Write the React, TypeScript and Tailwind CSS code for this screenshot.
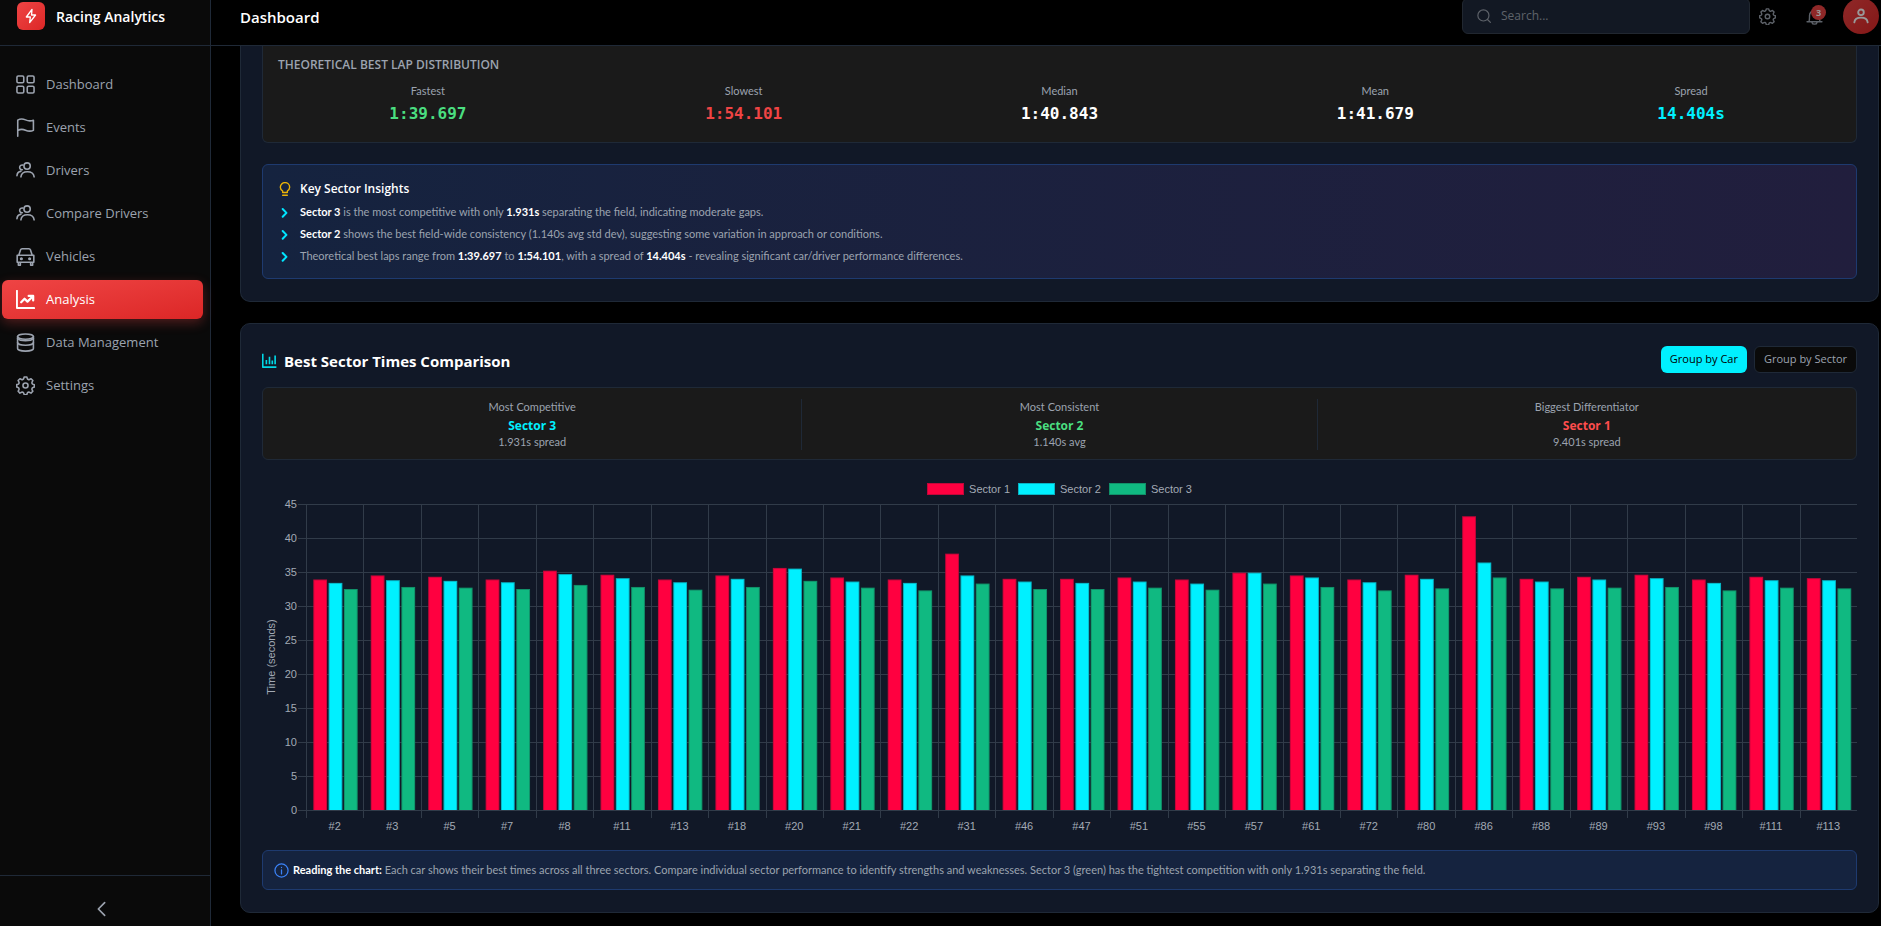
import React, { useLayoutEffect, useRef, useState } from 'react';

type IconProps = { className?: string; children?: React.ReactNode; strokeWidth?: number };

const Icon: React.FC<IconProps> = ({ className = 'size-[19px]', children, strokeWidth = 2 }) => (
  <svg
    viewBox="0 0 24 24"
    className={`shrink-0 ${className}`}
    fill="none"
    stroke="currentColor"
    strokeWidth={strokeWidth}
    strokeLinecap="round"
    strokeLinejoin="round"
    aria-hidden="true"
  >
    {children}
  </svg>
);

const GridIcon = () => (
  <Icon>
    <rect x="1.2" y="1.2" width="8.6" height="8.6" rx="1.6" />
    <rect x="14.2" y="1.2" width="8.6" height="8.6" rx="1.6" />
    <rect x="1.2" y="14.2" width="8.6" height="8.6" rx="1.6" />
    <rect x="14.2" y="14.2" width="8.6" height="8.6" rx="1.6" />
  </Icon>
);

const FlagIcon = () => (
  <Icon>
    <path d="M2.200 23V2.700C5.500.7 8.500.8 12 2.400s6.500 1.800 10 .4v12.800c-3.500 1.600-6.500 1.300-10-.2s-6.500-1.600-9.800.6" />
  </Icon>
);

const PeopleIcon = () => (
  <Icon>
    <circle cx="14" cy="6.400" r="4" />
    <path d="M6.200 20c.5-4.200 3.600-6.400 8.200-6.400s8 2.200 8.500 6.400" />
    <path d="M8.600 5.200a3 3 0 1 0-.6 5.800M1.200 18.600c.2-3.300 1.800-5.200 5-5.500" />
  </Icon>
);

const CarIcon = () => (
  <Icon>
    <path d="M3.500 10.500 5.800 3.600A2 2 0 0 1 7.700 2.200h8.600a2 2 0 0 1 1.900 1.400l2.300 6.900M1.500 10.500h21v8.700h-21zM3 19.500V23h2.500v-3.500M18.500 19.500V23H21v-3.500" />
    <circle cx="6.800" cy="14.800" r="1" fill="currentColor" />
    <circle cx="17.200" cy="14.800" r="1" fill="currentColor" />
  </Icon>
);

const TrendIcon = () => (
  <Icon>
    <path d="M1.200 1v21.800H23" strokeWidth="2.400" />
    <path d="m6.500 15.500 4.300-4.500 3.700 3.700 6.800-6.800M16 7.500h5.700v5.700" strokeWidth="2.800" />
  </Icon>
);

const DatabaseIcon = () => (
  <Icon>
    <ellipse cx="12" cy="4.500" rx="10" ry="3.300" />
    <path d="M2 4.500v15c0 1.900 4.500 3.400 10 3.400s10-1.500 10-3.400v-15" />
    <path d="M2 12c0 1.900 4.500 3.500 10 3.500s10-1.600 10-3.500" />
    <path d="M2 7c1.500 1.800 5 2.800 10 2.800S20.500 8.800 22 7" />
  </Icon>
);

const GearIcon: React.FC<{ className?: string }> = ({ className }) => (
  <Icon className={className}>
    <circle cx="12" cy="12" r="3.200" />
    <path d="M9.700 3.300 10.300 1.200h3.400l.6 2.100a2 2 0 0 0 2.700 1.100l2-1 2.300 2.300-1 2a2 2 0 0 0 1.100 2.700l1.800.6v2.800l-1.800.8a2 2 0 0 0-1.100 2.700l1 2-2.400 2.300-2-1a2 2 0 0 0-2.700 1.100l-.6 2.100h-3.200l-.6-2.100a2 2 0 0 0-2.800-1.100l-2 1-2.300-2.300 1-2a2 2 0 0 0-1.100-2.700l-1.700-.8v-2.900l1.700-.5a2 2 0 0 0 1.100-2.700l-1-2L5 3.400l2 1a2 2 0 0 0 2.700-1.100z" />
  </Icon>
);

const navItems = [
  { label: 'Dashboard', icon: <GridIcon /> },
  { label: 'Events', icon: <FlagIcon /> },
  { label: 'Drivers', icon: <PeopleIcon /> },
  { label: 'Compare Drivers', icon: <PeopleIcon /> },
  { label: 'Vehicles', icon: <CarIcon /> },
  { label: 'Analysis', icon: <TrendIcon />, active: true },
  { label: 'Data Management', icon: <DatabaseIcon /> },
  { label: 'Settings', icon: <GearIcon /> },
];

const Sidebar: React.FC = () => (
  <aside className="flex w-[211px] shrink-0 flex-col border-r border-[#1f2937] bg-[#0a0a0a]">
    <div className="flex h-[46px] items-start gap-[11px] border-b border-[#1f2937] pt-0.5 pl-[17px]">
      <div className="flex size-7 items-center justify-center rounded-md bg-linear-to-br from-[#ef4444] to-[#dc2626] text-white">
        <Icon className="size-4">
          <path d="M13.500 2 5 13.500h6L10 22l8.800-11.500h-6z" />
        </Icon>
      </div>
      <span className="text-[14px] leading-[30px] font-semibold text-white">Racing Analytics</span>
    </div>
    <nav className="flex flex-1 flex-col gap-1 pt-[19px] pr-[7px] pl-0.5">
      {navItems.map((item) => (
        <a
          key={item.label}
          href="#"
          className={
            item.active
              ? 'flex h-[39px] items-center gap-[11px] rounded-md bg-linear-to-br from-[#ef4444] to-[#dc2626] pl-3.5 text-[13px] font-medium text-white shadow-[0_4px_12px_rgba(239,68,68,0.3)]'
              : 'flex h-[39px] items-center gap-[11px] rounded-md pl-3.5 text-[13px] font-medium text-[#9ca3af]'
          }
        >
          {item.icon}
          {item.label}
        </a>
      ))}
    </nav>
    <div className="flex h-[51px] justify-center border-t border-[#1f2937] pt-[25px] pr-[7px]">
      <button type="button" aria-label="Collapse sidebar" className="flex size-4 items-center justify-center text-[#9ca3af]">
        <Icon className="size-4" strokeWidth={2.5}>
          <path d="m16 2.500-9.500 9.500 9.500 9.500" />
        </Icon>
      </button>
    </div>
  </aside>
);

const Header: React.FC = () => (
  <header className="flex h-[46px] shrink-0 items-start justify-between overflow-hidden border-b border-[#1f2937] pr-0.5 pl-[29px]">
    <h1 className="text-[15px] leading-[34px] font-semibold text-white">Dashboard</h1>
    <div className="flex h-8 items-center opacity-60">
      <label className="flex h-9 w-[288px] items-center gap-2.5 rounded-md border border-[#374151] bg-[#1e293b] px-3.5 text-[#9ca3af]">
        <Icon className="size-3.5">
          <circle cx="11" cy="11" r="9.500" />
          <path d="m18 18 5 5" />
        </Icon>
        <input
          type="text"
          aria-label="Search"
          placeholder="Search..."
          className="w-full bg-transparent text-[12px] text-white outline-none placeholder:text-[#9ca3af]"
        />
      </label>
      <button type="button" aria-label="Settings" className="ml-2 flex size-[18px] items-center justify-center text-[#9ca3af]">
        <GearIcon className="size-[17px]" />
      </button>
      <button type="button" aria-label="Notifications" className="relative ml-[29px] flex size-[18px] items-center justify-center text-[#9ca3af]">
        <Icon className="size-[17px]">
          <path d="M1.500 19.500h21M4 19.500c1-2 1-4 1-9a7 7 0 0 1 14 0c0 5 0 7 1 9M8.500 20.500c.5 3 6.500 3 7 0" />
        </Icon>
        <span className="absolute -top-0.5 -right-[3px] flex size-[15px] items-center justify-center rounded-full bg-[#ef4444] text-[9px] font-bold text-white">
          3
        </span>
      </button>
      <button type="button" aria-label="Account" className="ml-5 flex size-9 items-center justify-center rounded-full bg-linear-to-br from-[#ef4444] to-[#dc2626] text-white">
        <Icon className="size-4" strokeWidth={2.8}>
          <circle cx="12" cy="6.500" r="4.200" />
          <path d="M2 21.500c.5-4.500 4-7 10-7s9.500 2.500 10 7" />
        </Icon>
      </button>
    </div>
  </header>
);

const lapStats = [
  { label: 'Fastest', value: '1:39.697', color: 'text-[#4ade80]' },
  { label: 'Slowest', value: '1:54.101', color: 'text-[#ef4444]' },
  { label: 'Median', value: '1:40.843', color: 'text-white' },
  { label: 'Mean', value: '1:41.679', color: 'text-white' },
  { label: 'Spread', value: '14.404s', color: 'text-[#00f0ff]' },
];

const B: React.FC<{ children: React.ReactNode }> = ({ children }) => (
  <strong className="font-bold text-white">{children}</strong>
);

const insights = [
  <>
    <B>Sector 3</B> is the most competitive with only <B>1.931s</B> separating the field, indicating moderate gaps.
  </>,
  <>
    <B>Sector 2</B> shows the best field-wide consistency (1.140s avg std dev), suggesting some variation in approach or
    conditions.
  </>,
  <>
    Theoretical best laps range from <B>1:39.697</B> to <B>1:54.101</B>, with a spread of <B>14.404s</B> - revealing
    significant car/driver performance differences.
  </>,
];

const SectorInsights: React.FC = () => (
  <section className="rounded-b-[10px] border border-t-0 border-[#1f2937] bg-[#111827] px-[21px] pb-[22px]">
    <div className="rounded-b-md border border-t-0 border-[#1f2937] bg-[#1a1a1a] px-[15px] pt-[9px] pb-[16px]">
      <h3 className="text-[12px] leading-5 font-semibold text-[#9ca3af]">THEORETICAL BEST LAP DISTRIBUTION</h3>
      <div className="mt-2 grid grid-cols-5 gap-4 text-center">
        {lapStats.map((stat) => (
          <div key={stat.label}>
            <div className='font-[Lato,"Noto_Sans",sans-serif] text-[11px] leading-4 text-[#9ca3af]'>{stat.label}</div>
            <div className={`mt-[3px] font-["DejaVu_Sans_Mono",monospace] text-[16px] leading-6 font-bold ${stat.color}`}>
              {stat.value}
            </div>
          </div>
        ))}
      </div>
    </div>
    <div className="mt-[21px] rounded-md border border-[#1e3a6f] bg-linear-to-r from-[#15233f] to-[#211e3d] px-[15px] pt-3.5 pb-3.5">
      <h3 className="flex items-center gap-2 text-[12px] leading-5 font-semibold text-white">
        <Icon className="size-3.5 text-[#eab308]" strokeWidth={2.4}>
          <path d="M8 18v-2.500C5 13.500 4 11.500 4 9a8 8 0 0 1 16 0c0 2.500-1 4.500-4 6.500V18zM8 22.800h8" />
        </Icon>
        Key Sector Insights
      </h3>
      <ul className="mt-1 flex flex-col gap-[5px]">
        {insights.map((text, i) => (
          <li key={i} className='flex items-center gap-2 font-[Lato,"Noto_Sans",sans-serif] text-[11px] leading-[17px] text-[#9ca3af]'>
            <Icon className="size-3.5 text-[#00e5ff]" strokeWidth={3.5}>
              <path d="m8 7 6.500 6.500L8 20" />
            </Icon>
            <span>{text}</span>
          </li>
        ))}
      </ul>
    </div>
  </section>
);

const series = [
  { name: 'Sector 1', fill: '#ff0040', stroke: '#c20739' },
  { name: 'Sector 2', fill: '#00f0ff', stroke: '#08b4c4' },
  { name: 'Sector 3', fill: '#10b981', stroke: '#119069' },
];

const cars: [string, number, number, number][] = [
  ['#2', 33.9, 33.4, 32.5],
  ['#3', 34.5, 33.8, 32.8],
  ['#5', 34.3, 33.7, 32.7],
  ['#7', 33.9, 33.5, 32.5],
  ['#8', 35.2, 34.7, 33.1],
  ['#11', 34.6, 34.1, 32.8],
  ['#13', 33.9, 33.5, 32.4],
  ['#18', 34.5, 34.0, 32.8],
  ['#20', 35.6, 35.5, 33.7],
  ['#21', 34.2, 33.6, 32.7],
  ['#22', 33.9, 33.4, 32.3],
  ['#31', 37.7, 34.5, 33.3],
  ['#46', 34.0, 33.6, 32.5],
  ['#47', 34.0, 33.4, 32.5],
  ['#51', 34.2, 33.6, 32.7],
  ['#55', 33.9, 33.3, 32.4],
  ['#57', 34.9, 34.9, 33.3],
  ['#61', 34.5, 34.2, 32.8],
  ['#72', 33.9, 33.5, 32.3],
  ['#80', 34.6, 34.0, 32.6],
  ['#86', 43.2, 36.4, 34.2],
  ['#88', 34.0, 33.6, 32.6],
  ['#89', 34.3, 33.9, 32.7],
  ['#93', 34.6, 34.1, 32.8],
  ['#98', 33.9, 33.4, 32.3],
  ['#111', 34.3, 33.8, 32.7],
  ['#113', 34.1, 33.8, 32.6],
];

const PLOT_LEFT = 44;
const PLOT_TOP = 8;
const PLOT_HEIGHT = 306;
const MAX = 45;

const BarChart: React.FC = () => {
  const boxRef = useRef<HTMLDivElement>(null);
  const [width, setWidth] = useState(1595);

  useLayoutEffect(() => {
    const box = boxRef.current;
    if (!box) return;
    const measure = () => setWidth(box.clientWidth);
    measure();
    const observer = new ResizeObserver(measure);
    observer.observe(box);
    return () => observer.disconnect();
  }, []);

  const bottom = PLOT_TOP + PLOT_HEIGHT;
  const step = (width - PLOT_LEFT) / cars.length;
  const slot = (step * 0.8) / 3;
  const barWidth = slot * 0.9;
  const toY = (value: number) => bottom - (value / MAX) * PLOT_HEIGHT;

  return (
    <div ref={boxRef} className="w-full">
      <svg
        width={width}
        height="340"
        role="img"
        aria-label="Best sector times per car"
        className='block font-["Liberation_Sans",sans-serif] text-[11px]'
      >
        {Array.from({ length: 10 }, (_, i) => i * 5).map((tick) => (
          <g key={tick}>
            <line x1={PLOT_LEFT - 8} x2={width} y1={Math.round(toY(tick)) + 0.5} y2={Math.round(toY(tick)) + 0.5} stroke="#313b49" />
            <text x={PLOT_LEFT - 9} y={toY(tick) + 4} textAnchor="end" fill="#a3aab5">
              {tick}
            </text>
          </g>
        ))}
        {cars.map(([name], i) => {
          const x = Math.round(PLOT_LEFT + i * step) + 0.5;
          return (
            <g key={name}>
              <line x1={x} x2={x} y1={PLOT_TOP} y2={bottom + 8} stroke="#313b49" />
              <text x={PLOT_LEFT + (i + 0.5) * step} y={bottom + 20} textAnchor="middle" fill="#a3aab5">
                {name}
              </text>
            </g>
          );
        })}
        {cars.map(([name, ...times], i) =>
          times.map((time, s) => {
            const x = PLOT_LEFT + i * step + step * 0.1 + s * slot + slot * 0.1;
            return (
              <g key={`${name}-${s}`}>
                <rect x={x} y={toY(time)} width={barWidth} height={bottom - toY(time)} fill={series[s].stroke} />
                <rect x={x + 1} y={toY(time) + 1} width={barWidth - 2} height={bottom - toY(time) - 1} fill={series[s].fill} />
              </g>
            );
          })
        )}
        <text transform={`translate(13 ${PLOT_TOP + PLOT_HEIGHT / 2}) rotate(-90)`} textAnchor="middle" fill="#a3aab5">
          Time (seconds)
        </text>
      </svg>
    </div>
  );
};

const highlights = [
  { label: 'Most Competitive', value: 'Sector 3', note: '1.931s spread', color: 'text-[#00f0ff]' },
  { label: 'Most Consistent', value: 'Sector 2', note: '1.140s avg', color: 'text-[#4ade80] border-x' },
  { label: 'Biggest Differentiator', value: 'Sector 1', note: '9.401s spread', color: 'text-[#ff4d4d]' },
];

const SectorComparison: React.FC = () => (
  <section className="mt-[21px] rounded-[10px] border border-[#1f2937] bg-[#111827] px-[21px] pt-[22px] pb-[22px]">
    <div className="flex items-center justify-between">
      <h2 className="flex items-center gap-[7px] text-[15px] leading-7 font-bold text-white">
        <Icon className="size-[15px] text-[#00d8e6]">
          <path d="M1.200 1v21.500H23M7 18v-7M12 18V6M16.500 18v-6M21 18V4" strokeLinecap="butt" strokeWidth="2.600" />
        </Icon>
        Best Sector Times Comparison
      </h2>
      <div className="flex gap-[7px] pb-0.5">
        <button type="button" className="h-[27px] rounded-md bg-[#00f0ff] px-[9px] text-[11px] font-medium text-black">
          Group by Car
        </button>
        <button type="button" className="h-[27px] rounded-md border border-[#1f2937] bg-[#0a0a0a] px-[9px] text-[11px] font-medium text-[#9ca3af]">
          Group by Sector
        </button>
      </div>
    </div>
    <div className="mt-3 grid grid-cols-3 gap-[11px] rounded-md border border-[#1f2937] bg-[#1a1a1a] px-[11px] pt-[11px] pb-[9px] text-center">
      {highlights.map((item) => (
        <div key={item.label} className={`border-[#1f2937] ${item.color}`}>
          <div className='font-[Lato,"Noto_Sans",sans-serif] text-[11px] leading-4 text-[#9ca3af]'>{item.label}</div>
          <div className="mt-[3px] text-[12px] leading-4 font-bold">{item.value}</div>
          <div className='font-[Lato,"Noto_Sans",sans-serif] text-[11px] leading-4 text-[#9ca3af]'>{item.note}</div>
        </div>
      ))}
    </div>
    <div className='mt-[22px] flex justify-center gap-2 font-["Liberation_Sans",sans-serif] text-[11px] leading-[14px] text-[#a3aab5]'>
      {series.map((s) => (
        <div key={s.name} className="flex items-center gap-[5px]">
          <span className="h-3 w-[37px] border" style={{ backgroundColor: s.fill, borderColor: s.stroke }} />
          {s.name}
        </div>
      ))}
    </div>
    <BarChart />
    <div className='mt-3.5 flex h-10 items-center gap-1 rounded-md border border-[#1e3a6f] bg-[#15233f] px-[11px] font-[Lato,"Noto_Sans",sans-serif] text-[11px] text-[#9ca3af]'>
      <Icon className="size-[15px] text-[#3b82f6]">
        <circle cx="12" cy="12" r="10.500" />
        <path d="M12 11v6.500M12 6.800v.4" />
      </Icon>
      <p>
        <B>Reading the chart:</B> Each car shows their best times across all three sectors. Compare individual sector
        performance to identify strengths and weaknesses. Sector 3 (green) has the tightest competition with only 1.931s
        separating the field.
      </p>
    </div>
  </section>
);

const App: React.FC = () => (
  <div className='flex min-h-screen bg-black font-["Open_Sans","Noto_Sans",sans-serif]'>
    <Sidebar />
    <div className="flex min-w-0 flex-1 flex-col">
      <Header />
      <main className="flex-1 pr-0.5 pb-3 pl-[29px]">
        <SectorInsights />
        <SectorComparison />
      </main>
    </div>
  </div>
);

export default App;
